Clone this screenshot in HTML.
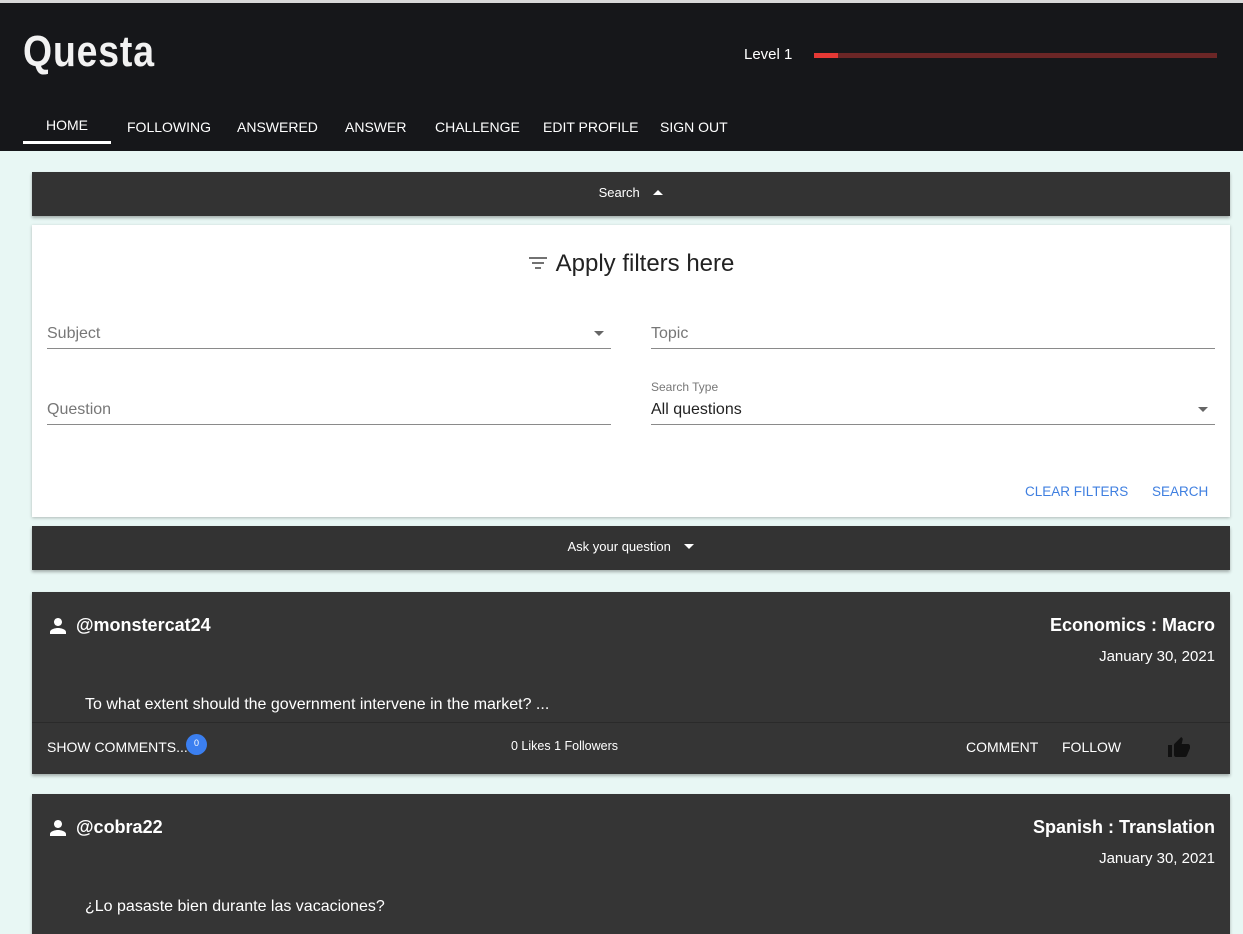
<!DOCTYPE html>
<html><head><meta charset="utf-8"><style>
*{box-sizing:border-box;margin:0;padding:0}
body{width:1243px;height:922px;overflow:hidden;background:#e8f7f4;font-family:"Liberation Sans",sans-serif;position:relative}
.hdr{position:absolute;left:0;top:0;width:1243px;height:151px;background:#16171a;border-top:3px solid #d8d8d8}
.logo{position:absolute;left:23px;top:24px;color:#f2f2f2;font-size:44px;font-weight:bold;letter-spacing:1px;transform:scaleX(.85);transform-origin:left}
.lvl{position:absolute;left:744px;top:43px;color:#fff;font-size:15px}
.bar{position:absolute;left:814px;top:50px;width:403px;height:5px;background:#6b2626}
.bar i{position:absolute;left:0;top:0;width:24px;height:5px;background:#e53935}
.nav{position:absolute;top:116px;color:#fff;font-size:14px}
.ul{position:absolute;left:23px;top:141px;width:88px;height:3px;background:#fff}
.panel{position:absolute;left:32px;width:1198px;background:#333;color:#fff;font-size:13px;text-align:center;box-shadow:0 2px 3px rgba(0,0,0,.3)}
.card{position:absolute;left:32px;top:225px;width:1198px;height:292px;background:#fff;box-shadow:0 1px 3px rgba(0,0,0,.25)}
.fld{position:absolute;border-bottom:1px solid #8a8a8a;height:24px;color:#777;font-size:16px}
.tri{position:absolute;width:0;height:0;border-left:5px solid transparent;border-right:5px solid transparent;border-top:5px solid #666}
.btn{position:absolute;color:#3f7fe0;font-size:13.5px;top:484px}
.post{position:absolute;left:32px;width:1198px;background:#353535;color:#fff;box-shadow:0 2px 3px rgba(0,0,0,.3)}
.user{position:absolute;left:44px;font-size:18px;font-weight:bold}
.subj{position:absolute;right:15px;font-size:18px;font-weight:bold}
.date{position:absolute;right:15px;font-size:15px}
.q{position:absolute;left:53px;font-size:16px}
</style></head><body>
<div class="hdr">
<div class="logo">Questa</div>
<div class="lvl">Level 1</div>
<div class="bar"><i></i></div>
<div class="nav" style="left:46px;top:114px">HOME</div>
<div class="nav" style="left:127px">FOLLOWING</div>
<div class="nav" style="left:237px">ANSWERED</div>
<div class="nav" style="left:345px">ANSWER</div>
<div class="nav" style="left:435px">CHALLENGE</div>
<div class="nav" style="left:543px">EDIT PROFILE</div>
<div class="nav" style="left:660px">SIGN OUT</div>
<div class="ul" style="top:138px"></div>
</div>
<div class="panel" style="top:172px;height:44px;line-height:42px">Search <span style="display:inline-block;width:0;height:0;border-left:5px solid transparent;border-right:5px solid transparent;border-bottom:5px solid #fff;margin-left:10px;vertical-align:2px"></span></div>
<div class="card">
<div style="position:absolute;left:0;width:100%;top:25px;text-align:center;font-size:24px;color:#222">
<svg width="20" height="14" viewBox="0 0 20 14" style="margin-right:8px;vertical-align:1px"><path d="M1 2h18M4 7h12M7 12h6" stroke="#444" stroke-width="1.6"/></svg>Apply filters here</div>
<div class="fld" style="left:15px;top:100px;width:564px">Subject</div><div class="tri" style="left:562px;top:106px"></div>
<div class="fld" style="left:619px;top:100px;width:564px">Topic</div>
<div style="position:absolute;left:619px;top:155px;font-size:12px;color:#777">Search Type</div>
<div class="fld" style="left:15px;top:176px;width:564px">Question</div>
<div class="fld" style="left:619px;top:176px;width:564px;color:#222">All questions</div><div class="tri" style="left:1166px;top:182px"></div>
</div>
<div class="btn" style="left:1025px">CLEAR FILTERS</div>
<div class="btn" style="left:1152px">SEARCH</div>
<div class="panel" style="top:526px;height:44px;line-height:42px">Ask your question <span style="display:inline-block;width:0;height:0;border-left:5px solid transparent;border-right:5px solid transparent;border-top:5px solid #fff;margin-left:10px;vertical-align:2px"></span></div>

<div class="post" style="top:592px;height:182px">
<svg style="position:absolute;left:14px;top:22px" width="24" height="24" viewBox="0 0 24 24"><path fill="#fff" d="M12 12c2.2 0 4-1.8 4-4s-1.8-4-4-4-4 1.8-4 4 1.8 4 4 4zm0 2c-2.7 0-8 1.3-8 4v2h16v-2c0-2.7-5.3-4-8-4z"/></svg>
<div class="user" style="top:23px">@monstercat24</div>
<div class="subj" style="top:23px">Economics : Macro</div>
<div class="date" style="top:56px">January 30, 2021</div>
<div class="q" style="top:104px">To what extent should the government intervene in the market? ...</div>
<div style="position:absolute;left:0;top:130px;width:100%;border-top:1px solid #2a2a2a"></div>
<div style="position:absolute;left:15px;top:147px;font-size:14px">SHOW COMMENTS...</div>
<div style="position:absolute;left:154px;top:142px;width:21px;height:21px;border-radius:50%;background:#3b7ff0;font-size:9px;text-align:center;line-height:19px">0</div>
<div style="position:absolute;left:479px;top:147px;font-size:12.5px">0 Likes 1 Followers</div>
<div style="position:absolute;left:934px;top:147px;font-size:14px">COMMENT</div>
<div style="position:absolute;left:1030px;top:147px;font-size:14px">FOLLOW</div>
<svg style="position:absolute;left:1134px;top:144px" width="26" height="24" viewBox="0 0 24 24"><path fill="#111" d="M1 21h4V9H1v12zm22-11c0-1.1-.9-2-2-2h-6.3l1-4.6v-.3c0-.4-.2-.8-.4-1.1L14.2 1 7.6 7.6C7.2 7.9 7 8.4 7 9v10c0 1.1.9 2 2 2h9c.8 0 1.5-.5 1.8-1.2l3-7.1c.1-.2.2-.5.2-.7v-2z"/></svg>
</div>

<div class="post" style="top:794px;height:140px">
<svg style="position:absolute;left:14px;top:22px" width="24" height="24" viewBox="0 0 24 24"><path fill="#fff" d="M12 12c2.2 0 4-1.8 4-4s-1.8-4-4-4-4 1.8-4 4 1.8 4 4 4zm0 2c-2.7 0-8 1.3-8 4v2h16v-2c0-2.7-5.3-4-8-4z"/></svg>
<div class="user" style="top:23px">@cobra22</div>
<div class="subj" style="top:23px">Spanish : Translation</div>
<div class="date" style="top:56px">January 30, 2021</div>
<div class="q" style="top:104px">¿Lo pasaste bien durante las vacaciones?</div>
</div>
</body></html>
